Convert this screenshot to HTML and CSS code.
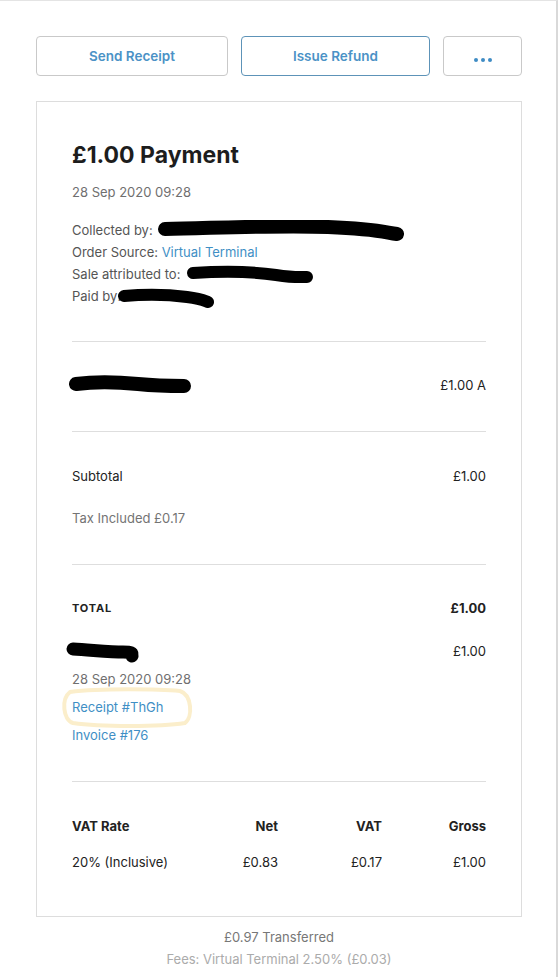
FILE: index.html
```html
<!DOCTYPE html>
<html>
<head>
<meta charset="utf-8">
<link rel="stylesheet" href="styles.css">
</head>
<body>
<div class="page">
  <div class="actions">
    <button class="btn btn-send">Send Receipt</button>
    <button class="btn btn-refund">Issue Refund</button>
    <button class="btn btn-more"><span class="dots"><i></i><i></i><i></i></span></button>
  </div>

  <div class="card">
    <div class="head">
      <h1 class="title">£1.00 Payment</h1>
      <div class="date">28 Sep 2020 09:28</div>
      <div class="info">
        <div class="info-line">Collected by: <svg class="redact" width="246" height="22" viewBox="0 0 246 22"><path d="M7 9 C60 8 120 5 170 7 S225 12 239 14" stroke="#000" stroke-width="14" fill="none" stroke-linecap="round"/></svg></div>
        <div class="info-line">Order Source: <a class="link">Virtual Terminal</a></div>
        <div class="info-line">Sale attributed to: <svg class="redact" width="128" height="20" viewBox="0 0 128 20"><path d="M7 8 C40 6 70 7 90 10 S115 12 121 12" stroke="#000" stroke-width="12" fill="none" stroke-linecap="round"/></svg></div>
        <div class="info-line">Paid by:<svg class="redact redact-paid" width="98" height="22" viewBox="0 0 98 22"><path d="M7 8 C30 6 55 7 70 9 S88 13 91 14" stroke="#000" stroke-width="12" fill="none" stroke-linecap="round"/></svg></div>
      </div>
    </div>

    <div class="section item-section">
      <div class="row">
        <svg class="redact" width="124" height="22" viewBox="0 0 124 22"><path d="M8 10 C30 7 50 8 70 10 S105 12 116 12" stroke="#000" stroke-width="14" fill="none" stroke-linecap="round"/></svg>
        <span>£1.00 A</span>
      </div>
    </div>

    <div class="section sub-section">
      <div class="row"><span>Subtotal</span><span>£1.00</span></div>
      <div class="tax">Tax Included £0.17</div>
    </div>

    <div class="section total-section">
      <div class="row total-row"><span class="total-label">TOTAL</span><span class="total-val">£1.00</span></div>
      <div class="row tender-row">
        <svg class="redact" width="74" height="24" viewBox="0 0 74 24"><path d="M7 8 C25 9 45 11 57 11 S65 13 66 15" stroke="#000" stroke-width="13" fill="none" stroke-linecap="round"/></svg>
        <span>£1.00</span>
      </div>
      <div class="meta meta-date">28 Sep 2020 09:28</div>
      <div class="meta"><span class="hl"><a class="link">Receipt #ThGh</a><svg class="hl-ring" width="134" height="42" viewBox="0 0 134 42"><path d="M10 5 C40 1 100 2 120 4 C132 8 133 30 125 36 C100 40 40 40 13 36 C3 33 1 12 10 5" stroke="#fbeecb" stroke-width="4" fill="none" stroke-linecap="round"/></svg></span></div>
      <div class="meta"><a class="link">Invoice #176</a></div>
    </div>

    <div class="section vat-section">
      <div class="vat-grid vat-head">
        <span>VAT Rate</span><span class="r">Net</span><span class="r">VAT</span><span class="r">Gross</span>
      </div>
      <div class="vat-grid vat-body">
        <span>20% (Inclusive)</span><span class="r">£0.83</span><span class="r">£0.17</span><span class="r">£1.00</span>
      </div>
    </div>
  </div>

  <div class="footer">
    <div class="transferred">£0.97 Transferred</div>
    <div class="fees">Fees: Virtual Terminal 2.50% (£0.03)</div>
  </div>
</div>
</body>
</html>
```

FILE: styles.css
```css
* { box-sizing: border-box; }
html, body { margin: 0; padding: 0; background: #fff; }
body {
  font-family: Inter, "Noto Sans", "Liberation Sans", sans-serif;
  color: #222;
  font-size: 13px;
}
.page {
  width: 558px;
  height: 977px;
  border-top: 1px solid #e4e4e4;
  border-right: 2px solid #d9d9d9;
  padding: 35px 0 0 36px;
}
.actions {
  display: flex;
  gap: 13px;
  width: 486px;
}
.btn {
  height: 40px;
  background: #fff;
  border: 1px solid #c9c9c9;
  border-radius: 4px;
  font-family: inherit;
  font-size: 13.5px;
  font-weight: 600;
  color: #4b92c6;
  padding: 0;
}
.btn-send { width: 192px; }
.btn-refund { width: 189px; border-color: #5d93b8; }
.btn-more { width: 79px; }
.dots { display: inline-flex; gap: 3px; padding-top: 11px; }
.dots i { width: 4px; height: 4px; border-radius: 50%; background: #3f8cc4; display: block; }

.card {
  margin-top: 25px;
  width: 486px;
  border: 1px solid #dddddd;
  padding: 0 35px 44px 35px;
}
.head { padding-top: 38px; padding-bottom: 34px; }
.title {
  margin: 0;
  font-size: 23px;
  line-height: 30px;
  font-weight: 700;
  color: #1d1d1d;
}
.date { margin-top: 12px; line-height: 20px; color: #6f6f6f; }
.info { margin-top: 17px; color: #555; }
.info-line { line-height: 22px; height: 22px; display: flex; align-items: center; white-space: pre; }
.redact { display: block; flex: none; }
.info-line .redact { margin-left: 2px; margin-top: 2px; }
.info-line .redact-paid { margin-left: -4px; margin-top: 6px; }
.link { color: #3f8fc5; text-decoration: none; }

.section { border-top: 1px solid #dedede; }
.row { display: flex; justify-content: space-between; align-items: center; line-height: 20px; }
.item-section { padding: 32px 0 35px; }
.item-section .row { margin-left: -4px; }
.sub-section { padding: 34px 0 36px; }
.tax { margin-top: 22px; line-height: 20px; color: #747474; }
.total-section { padding: 33px 0 32px; }
.total-label { font-size: 11px; font-weight: 700; letter-spacing: 0.8px; color: #222; }
.total-val { font-weight: 700; }
.tender-row { margin-top: 23px; margin-left: -6px; height: 20px; }
.tender-row .redact { margin-top: 4px; }
.meta { line-height: 28px; }
.meta-date { color: #6f6f6f; margin-top: 4px; }
.hl { position: relative; display: inline-block; }
.hl-ring { position: absolute; left: -12px; top: -6px; }

.vat-section { padding: 34px 0 0; }
.vat-grid { display: grid; grid-template-columns: 1fr 104px 104px 104px; line-height: 20px; }
.vat-grid .r { text-align: right; }
.vat-head { font-weight: 700; color: #222; }
.vat-body { margin-top: 16px; }

.footer { width: 486px; text-align: center; margin-top: 9px; }
.transferred { line-height: 22px; color: #777; }
.fees { line-height: 22px; color: #ababab; }
```
